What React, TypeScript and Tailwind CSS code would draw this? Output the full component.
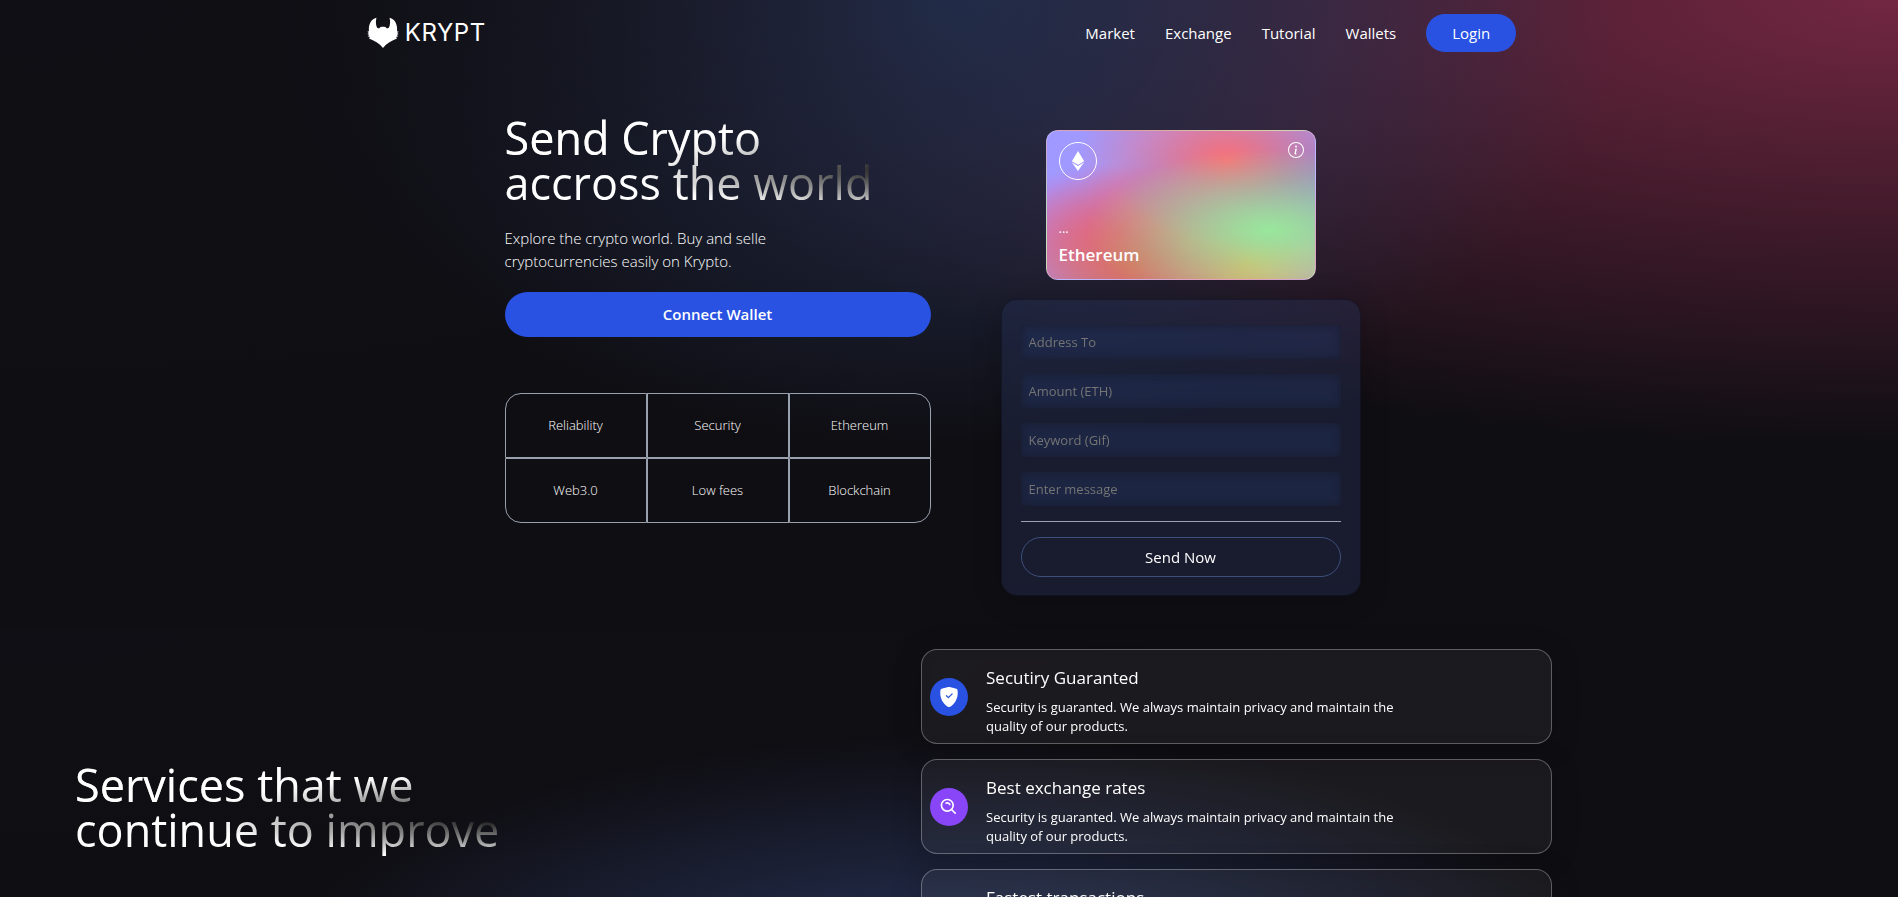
import { BsInfoCircle, BsShieldFillCheck } from "react-icons/bs";
import { BiSearchAlt } from "react-icons/bi";
import { RiHeart2Fill } from "react-icons/ri";
import { SiEthereum } from "react-icons/si";
import type { ReactNode } from "react";

const welcomeBg =
  "bg-[#0f0e13] bg-[image:radial-gradient(at_0%_0%,hsla(253,16%,7%,1)_0,transparent_50%),radial-gradient(at_50%_0%,hsla(223,39%,26%,1)_0,transparent_50%),radial-gradient(at_100%_0%,hsla(339,49%,30%,1)_0,transparent_50%)]";
const servicesBg =
  "bg-[#0f0e13] bg-[image:radial-gradient(at_0%_0%,hsla(253,16%,7%,1)_0,transparent_50%),radial-gradient(at_50%_100%,hsla(225,39%,25%,1)_0,transparent_50%)]";
const ethCardBg =
  "bg-[#a099ff] bg-[image:radial-gradient(at_83%_67%,rgb(152,231,156)_0,transparent_58%),radial-gradient(at_67%_20%,hsla(357,94%,71%,1)_0,transparent_59%),radial-gradient(at_88%_35%,hsla(222,81%,65%,1)_0,transparent_50%),radial-gradient(at_31%_91%,hsla(9,61%,61%,1)_0,transparent_52%),radial-gradient(at_27%_71%,hsla(336,91%,65%,1)_0,transparent_49%),radial-gradient(at_74%_89%,hsla(30,98%,65%,1)_0,transparent_51%),radial-gradient(at_53%_75%,hsla(174,94%,68%,1)_0,transparent_45%)]";
const textGradient =
  "bg-white bg-[image:radial-gradient(at_4%_36%,hsla(0,0%,100%,1)_0,transparent_53%),radial-gradient(at_100%_60%,rgb(0,0,0)_0,transparent_50%)] bg-clip-text text-transparent";

const navItems = ["Market", "Exchange", "Tutorial", "Wallets"];

const features = [
  { label: "Reliability", corner: "rounded-tl-2xl" },
  { label: "Security", corner: "" },
  { label: "Ethereum", corner: "rounded-tr-2xl" },
  { label: "Web3.0", corner: "rounded-bl-2xl" },
  { label: "Low fees", corner: "" },
  { label: "Blockchain", corner: "rounded-br-2xl" },
];

const fields = [
  { name: "addressTo", label: "Address To", type: "text" },
  { name: "amount", label: "Amount (ETH)", type: "number" },
  { name: "keyword", label: "Keyword (Gif)", type: "text" },
  { name: "message", label: "Enter message", type: "text" },
];

function Logo() {
  return (
    <a href="#" aria-label="Krypt" className="flex items-center gap-1.5 text-white">
      <svg viewBox="50 50 98 96" className="h-8 w-8 shrink-0 fill-white" aria-hidden="true">
        <path d="M79 51 C62 55 54 72 56 93 L51 94 L56 98 L51 101 L57 104 L52 108 L59 110 L56 115 C72 121 88 130 99 144 C110 130 126 121 142 115 L139 110 L146 108 L141 104 L147 101 L142 98 L147 94 L142 93 C144 72 136 55 119 51 C122 62 121 74 117 82 L111 84 C108 80 104 79 99 79 C94 79 90 80 87 84 L81 82 C77 74 76 62 79 51 Z" />
      </svg>
      <span className="font-[Inter,sans-serif] text-2xl leading-8 tracking-wide">KRYPT</span>
    </a>
  );
}

function Navbar() {
  return (
    <nav className="flex w-full items-center justify-between px-[15px] py-[14px]">
      <div className="grid flex-[0.5] grid-cols-2">
        <div className="col-start-2">
          <Logo />
        </div>
      </div>
      <ul className="flex items-center text-[15px] leading-[22px] text-white">
        {navItems.map((item) => (
          <li key={item} className="mx-[15px]">
            <a href="#">{item}</a>
          </li>
        ))}
        <li className="mx-[15px]">
          <button className="rounded-full bg-[#2952e3] px-[26px] py-2">Login</button>
        </li>
      </ul>
      <div />
    </nav>
  );
}

function EthCard() {
  return (
    <div
      className={`flex h-[150px] w-[270px] flex-col justify-between rounded-xl border border-white/30 py-[11px] pr-[11px] pl-3 text-white ${ethCardBg}`}
    >
      <div className="flex items-start justify-between">
        <div className="flex h-[38px] w-[38px] items-center justify-center rounded-full border border-white">
          <SiEthereum size={20} />
        </div>
        <BsInfoCircle size={16} />
      </div>
      <div>
        <p className="text-[13px] leading-[19px]">...</p>
        <p className="mt-1 text-[17px] leading-[26px] font-semibold">Ethereum</p>
      </div>
    </div>
  );
}

function TransferForm() {
  return (
    <form className="flex w-full max-w-[360px] flex-col rounded-2xl border border-black/30 bg-[rgb(39,51,89,0.4)] px-[19px] py-[18px] shadow-[0_4px_30px_rgba(0,0,0,0.2)] backdrop-blur-[5px]">
      <div className="flex flex-col gap-[15px] py-[7px]">
        {fields.map((f) => (
          <input
            key={f.name}
            name={f.name}
            type={f.type}
            aria-label={f.label}
            placeholder={f.label}
            className="h-[34px] w-full rounded-xs bg-[#24335f]/40 p-2 text-[13px] text-white shadow-[inset_0_0_8px_#1a1c2f] outline-none placeholder:text-[#757575]"
          />
        ))}
      </div>
      <hr className="my-2 border-gray-400" />
      <button
        type="button"
        className="mt-[7px] h-10 w-full rounded-full border border-[#3d4f7c] text-[15px] leading-[22px] text-white"
      >
        Send Now
      </button>
    </form>
  );
}

function Welcome() {
  return (
    <section className="flex w-full justify-center">
      <div className="flex w-full max-w-[889px] items-start gap-[37px] pt-[45px] pb-[34px]">
        <div className="flex flex-1 flex-col">
          <h1 className={`py-1 text-[45px] leading-[45px] ${textGradient}`}>
            Send Crypto
            <br />
            accross the world
          </h1>
          <p className="mt-[18px] w-9/12 text-[15px] leading-[23px] font-light text-white">
            Explore the crypto world. Buy and selle cryptocurrencies easily on Krypto.
          </p>
          <button className="my-[19px] h-[45px] w-full rounded-full bg-[#2952e3] text-[15px] font-semibold text-white">
            Connect Wallet
          </button>
          <ul className="mt-[37px] grid grid-cols-3">
            {features.map((f) => (
              <li
                key={f.label}
                className={`flex h-[65px] items-center justify-center border border-gray-400 text-[13px] font-light text-white ${f.corner}`}
              >
                {f.label}
              </li>
            ))}
          </ul>
        </div>
        <div className="flex flex-1 flex-col items-center gap-[19px] pt-[19px]">
          <EthCard />
          <TransferForm />
        </div>
      </div>
    </section>
  );
}

function ServiceCard({ color, title, icon }: { color: string; title: string; icon: ReactNode }) {
  return (
    <article className="flex items-center gap-[18px] rounded-2xl border border-white/30 bg-white/5 px-2 py-[7px] text-white shadow-[0_4px_30px_rgba(0,0,0,0.2)] backdrop-blur-[5px]">
      <div className={`flex h-[38px] w-[38px] shrink-0 items-center justify-center rounded-full ${color}`}>
        {icon}
      </div>
      <div className="flex flex-1 flex-col gap-[7px] pt-2">
        <h2 className="text-[17px] leading-[26px]">{title}</h2>
        <p className="w-9/12 text-[13px] leading-[19px]">
          Security is guaranted. We always maintain privacy and maintain the quality of our products.
        </p>
      </div>
    </article>
  );
}

function Services() {
  return (
    <section className={`flex w-full items-center px-[75px] pt-[19px] pb-5 ${servicesBg}`}>
      <div className="flex-1">
        <h2 className={`w-fit py-1 pr-2 text-[45px] leading-[45px] ${textGradient}`}>
          Services that we
          <br />
          continue to improve
        </h2>
      </div>
      <div className="mr-[15.5%] flex w-[36.1%] flex-col gap-[15px]">
        <ServiceCard color="bg-[#2952e3]" title="Secutiry Guaranted" icon={<BsShieldFillCheck size={20} />} />
        <ServiceCard color="bg-[#8945f8]" title="Best exchange rates" icon={<BiSearchAlt size={20} />} />
        <ServiceCard color="bg-[#f84550]" title="Fastest transactions" icon={<RiHeart2Fill size={20} />} />
      </div>
    </section>
  );
}

export default function App() {
  return (
    <div className="min-h-screen bg-[#0f0e13] font-['Open_Sans',sans-serif]">
      <div className={welcomeBg}>
        <Navbar />
        <Welcome />
      </div>
      <Services />
    </div>
  );
}
